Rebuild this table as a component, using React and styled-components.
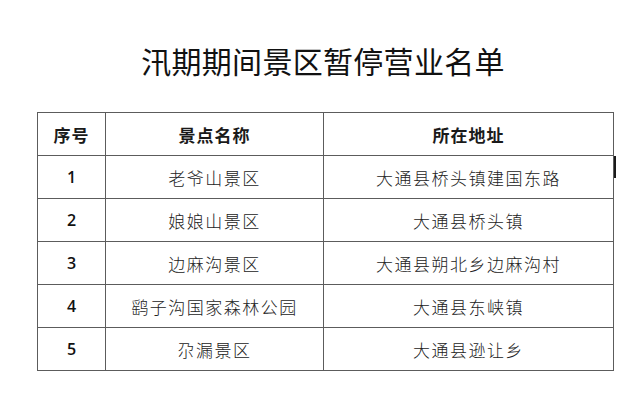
import React from 'react';
import styled, { createGlobalStyle } from 'styled-components';

const GlobalStyle = createGlobalStyle`
  html, body {
    margin: 0;
    padding: 0;
    background: #ffffff;
  }
  body {
    font-family: "Noto Sans CJK SC", "Noto Sans", sans-serif;
    color: #1c1c1c;
  }
`;

const Page = styled.div`
  width: 640px;
  height: 404px;
  overflow: hidden;
  display: flex;
  flex-direction: column;
  align-items: flex-start;
`;

const Title = styled.h1`
  align-self: stretch;
  margin: 0;
  padding: 42px 0 0 6px;
  height: 70px;
  text-align: center;
  font-size: 30px;
  line-height: 36px;
  font-weight: 400;
  letter-spacing: 0.3px;
  color: #111;
`;

const Table = styled.table`
  margin-left: 37px;
  width: 576px;
  border-collapse: collapse;
  table-layout: fixed;
`;

const HeadCell = styled.th`
  height: 42px;
  padding: 0;
  border: 1px solid #5c5c5c;
  font-size: 17px;
  font-weight: 700;
  letter-spacing: 1px;
  text-align: center;
  color: #1a1a1a;
`;

const Cell = styled.td`
  position: relative;
  height: 42px;
  padding: 0;
  border: 1px solid #5c5c5c;
  text-align: center;
  font-size: ${p => (p.$num ? '16px' : '17px')};
  font-family: ${p =>
    p.$num ? '"Open Sans", "Noto Sans", sans-serif' : '"Noto Sans CJK SC", sans-serif'};
  font-weight: ${p => (p.$num ? 600 : 300)};
  letter-spacing: ${p => (p.$num ? '0' : '1.5px')};
  color: ${p => (p.$num ? '#111' : '#222')};
`;

const Caret = styled.span`
  position: absolute;
  right: -3px;
  top: 0;
  width: 2px;
  height: 22px;
  background: #1a1a1a;
`;

const rows = [
  ['1', '老爷山景区', '大通县桥头镇建国东路'],
  ['2', '娘娘山景区', '大通县桥头镇'],
  ['3', '边麻沟景区', '大通县朔北乡边麻沟村'],
  ['4', '鹞子沟国家森林公园', '大通县东峡镇'],
  ['5', '尕漏景区', '大通县逊让乡'],
];

export default function App() {
  return (
    <>
      <GlobalStyle />
      <Page>
        <Title>汛期期间景区暂停营业名单</Title>
        <Table>
          <colgroup>
            <col style={{ width: 68 }} />
            <col style={{ width: 218 }} />
            <col style={{ width: 290 }} />
          </colgroup>
          <thead>
            <tr>
              <HeadCell>序号</HeadCell>
              <HeadCell>景点名称</HeadCell>
              <HeadCell>所在地址</HeadCell>
            </tr>
          </thead>
          <tbody>
            {rows.map(([n, name, addr], i) => (
              <tr key={n}>
                <Cell $num>{n}</Cell>
                <Cell>{name}</Cell>
                <Cell>
                  {addr}
                  {i === 0 && <Caret />}
                </Cell>
              </tr>
            ))}
          </tbody>
        </Table>
      </Page>
    </>
  );
}
